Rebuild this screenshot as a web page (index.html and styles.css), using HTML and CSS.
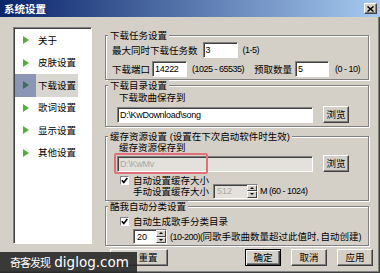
FILE: index.html
```html
<!DOCTYPE html>
<html lang="zh-CN">
<head>
  <meta charset="UTF-8" />
  <title>系统设置</title>
  <link rel="stylesheet" href="styles.css">
</head>
<body>
  <div class="window">
    <div class="title-bar">
      <span class="title">系统设置</span>
      <span class="close-btn">
        <svg width="7" height="6" viewBox="0 0 7 6"><path d="M0.5 0.5 L6.5 5.5 M6.5 0.5 L0.5 5.5" stroke="#000" stroke-width="1.5" /></svg>
      </span>
    </div>

    <div class="dialog">
      <ul class="side-list">
        <li><span class="ico"></span><span class="txt">关于</span></li>
        <li><span class="ico"></span><span class="txt">皮肤设置</span></li>
        <li class="selected"><span class="ico"></span><span class="txt">下载设置</span></li>
        <li><span class="ico"></span><span class="txt">歌词设置</span></li>
        <li><span class="ico"></span><span class="txt">显示设置</span></li>
        <li><span class="ico"></span><span class="txt">其他设置</span></li>
      </ul>

      <div class="main">
        <fieldset class="group g-task">
          <legend>下载任务设置</legend>
          <div class="row">
            <span>最大同时下载任务数</span>
            <input class="edit w35 ml5" type="text" value="3">
            <span class="en ml5">(1-5)</span>
          </div>
          <div class="row">
            <span>下载端口</span>
            <input class="edit w35 ml2" type="text" value="14222">
            <span class="en ml5">(1025 - 65535)</span>
            <span class="ml10">预取数量</span>
            <input class="edit w34 ml3" type="text" value="5">
            <span class="en ml6">(0 - 10)</span>
          </div>
        </fieldset>

        <fieldset class="group g-dir">
          <legend>下载目录设置</legend>
          <div class="row label-row"><span class="ml2">下载歌曲保存到</span></div>
          <div class="row path-row">
            <input class="edit path" type="text" value="D:\KwDownload\song">
            <button class="btn browse">浏览</button>
          </div>
        </fieldset>

        <fieldset class="group g-cache">
          <legend>缓存资源设置 (设置在下次启动软件时生效)</legend>
          <div class="row label-row"><span class="ml2">缓存资源保存到</span></div>
          <div class="row path-row">
            <span class="field">
              <input class="edit path disabled" type="text" value="D:\KwMv" disabled>
              <span class="mark"></span>
            </span>
            <button class="btn browse">浏览</button>
          </div>
          <div class="row check-row">
            <span class="check"><svg width="7" height="7" viewBox="0 0 7 7"><path d="M0.8 3.2 L2.8 5.4 L6.3 1" fill="none" stroke="#000" stroke-width="1.6" /></svg></span>
            <span class="ml4">自动设置缓存大小</span>
          </div>
          <div class="row spin-row">
            <span class="ml16">手动设置缓存大小</span>
            <span class="spin disabled w45 ml4">
              <input type="text" value="512" disabled>
              <span class="arrows"><i class="up"></i><i class="down"></i></span>
            </span>
            <span class="en ml2">M (60 - 1024)</span>
          </div>
        </fieldset>

        <fieldset class="group g-auto">
          <legend>酷我自动分类设置</legend>
          <div class="row check-row">
            <span class="check"><svg width="7" height="7" viewBox="0 0 7 7"><path d="M0.8 3.2 L2.8 5.4 L6.3 1" fill="none" stroke="#000" stroke-width="1.6" /></svg></span>
            <span class="ml4">自动生成歌手分类目录</span>
          </div>
          <div class="row spin-row">
            <span class="spin w34 ml16">
              <input type="text" value="20">
              <span class="arrows"><i class="up"></i><i class="down"></i></span>
            </span>
            <span class="ml3"><span class="en">(10-200)(</span>同歌手歌曲数量超过此值时<span class="en">, </span>自动创建<span class="en">)</span></span>
          </div>
        </fieldset>

        <div class="footer">
          <button class="btn reset">重置</button>
          <button class="btn default ok">确定</button>
          <button class="btn">取消</button>
          <button class="btn">应用</button>
        </div>
      </div>
    </div>

    <div class="watermark"><span class="wm-cn">奇客发现</span> diglog.com</div>
  </div>
</body>
</html>
```

FILE: styles.css
```css
html, body {
  margin: 0;
  width: 380px;
  height: 273px;
  overflow: hidden;
  font-family: "Liberation Sans", "Noto Sans CJK SC", sans-serif;
  font-size: 9.5px;
  color: #000;
  background: #d4d0c8;
}
.window {
  position: relative;
  height: 273px;
  box-shadow: inset -1px -1px 0 #404040, inset -2px -2px 0 #808080;
}

/* title bar */
.title-bar {
  height: 17px;
  display: flex;
  align-items: center;
  padding: 0 3px 0 4px;
  background: linear-gradient(to right, #0a246a, #a6caf0);
}
.title {
  color: #fff;
  font-weight: bold;
  font-size: 10.5px;
  line-height: 17px;
  font-family: "Noto Sans CJK SC", sans-serif;
}
.close-btn {
  margin-left: auto;
  width: 13px;
  height: 11px;
  box-sizing: border-box;
  background: #d4d0c8;
  border: 1px solid;
  border-color: #fff #404040 #404040 #fff;
  box-shadow: inset -1px -1px 0 #808080;
  display: flex;
  align-items: center;
  justify-content: center;
}
.close-btn svg { display: block; }

.dialog {
  display: flex;
  align-items: flex-start;
  padding-left: 13px;
}

/* left list */
.side-list {
  list-style: none;
  margin: 10px 0 0;
  padding: 1px;
  width: 79px;
  height: 217px;
  box-sizing: border-box;
  background: #fff;
  border: 1px solid;
  border-color: #808080 #fff #fff #808080;
  box-shadow: inset 1px 1px 0 #404040;
}
.side-list li {
  display: flex;
  height: 22.5px;
}
.side-list .ico {
  width: 21px;
  display: flex;
  align-items: center;
  justify-content: center;
}
.side-list .ico::before {
  content: "";
  border-left: 6px solid #52b03a;
  border-top: 4.5px solid transparent;
  border-bottom: 4.5px solid transparent;
}
.side-list .txt {
  display: flex;
  align-items: center;
  padding: 0 2px;
  line-height: 11px;
}
.side-list .selected .ico { background: #8b95b6; }
.side-list .selected .ico::before { border-left-color: #3f6e58; }
.side-list .selected .txt { background: #d8d6d1; }

/* right column */
.main {
  width: 264px;
  margin: 13px 0 0 13px;
}
.group {
  margin: 0;
  padding: 0;
  min-width: 0;
  border: 1px solid #808080;
  box-shadow: inset 1px 1px 0 #fff, 1px 1px 0 #fff;
}
.group legend {
  margin-left: 2px;
  padding: 0 2px;
  line-height: 11px;
  background: #d4d0c8;
}
.row {
  display: flex;
  align-items: center;
  line-height: 11px;
  white-space: nowrap;
}
.g-task { padding-bottom: 2px; }
.g-task .row { padding-left: 6px; height: 16px; margin-top: 3px; }
.g-task .row:first-of-type { margin-top: 1px; }

.g-dir .row, .g-cache .row, .g-auto .row { padding-left: 11px; }
.g-dir { padding-bottom: 3px; }
.g-dir .label-row { height: 11px; margin-top: 1px; }
.g-dir .path-row { height: 17px; margin-top: 3px; }

.g-cache { margin-top: 4px; padding-bottom: 4px; }
.g-cache .label-row { height: 11px; }
.g-cache .path-row { height: 17px; margin-top: 2px; }
.g-cache .check-row { height: 11px; margin-top: 3px; }
.g-cache .spin-row { height: 10px; }

.g-auto { padding-bottom: 1px; }
.g-auto .check-row { height: 11px; margin-top: 4px; }
.g-auto .spin-row { height: 15px; margin-top: 2px; }

.en {
  font-size: 9px;
  letter-spacing: -0.5px;
}
.ml2 { margin-left: 2px; }
.ml3 { margin-left: 3px; }
.ml4 { margin-left: 4px; }
.ml5 { margin-left: 5px; }
.ml6 { margin-left: 6px; }
.ml10 { margin-left: 10px; }
.ml16 { margin-left: 16px; }
.w34 { width: 34px; }
.w35 { width: 35px; }
.w45 { width: 45px; }

/* edit boxes */
.edit {
  box-sizing: border-box;
  height: 16px;
  margin-top: 0;
  margin-bottom: 0;
  padding: 0 2px;
  border: 1px solid;
  border-color: #808080 #fff #fff #808080;
  box-shadow: inset 1px 1px 0 #404040;
  background: #fff;
  font: 9px "Liberation Sans", sans-serif;
  letter-spacing: -0.3px;
  color: #000;
  outline: none;
}
.edit.path { width: 196px; }
.edit.disabled {
  background: #e4e1dc;
  color: #a8a8a8;
}
.field {
  position: relative;
  display: flex;
}
.mark {
  position: absolute;
  left: -3px;
  top: -3px;
  width: 94px;
  height: 21px;
  box-sizing: border-box;
  border: 2px solid #e2707a;
  border-radius: 2px;
}

/* buttons */
.btn {
  box-sizing: border-box;
  width: 36px;
  height: 17px;
  padding: 0;
  background: #d4d0c8;
  border: 1px solid;
  border-color: #fff #404040 #404040 #fff;
  box-shadow: inset -1px -1px 0 #808080;
  font: 9.5px "Noto Sans CJK SC", sans-serif;
  line-height: 15px;
  color: #000;
}
.btn.browse {
  width: 26px;
  margin-left: 10px;
}
.btn.default {
  border-color: #000;
  box-shadow: inset 1px 1px 0 #fff, inset -1px -1px 0 #404040, inset -2px -2px 0 #808080;
}

/* checkbox */
.check {
  width: 9px;
  height: 9px;
  margin-left: 3px;
  box-sizing: border-box;
  background: #fff;
  border: 1px solid;
  border-color: #808080 #fff #fff #808080;
  display: flex;
  align-items: center;
  justify-content: center;
}
.check svg { display: block; }

/* spin boxes */
.spin {
  display: flex;
  flex-shrink: 0;
  height: 15px;
  box-sizing: border-box;
  background: #fff;
  border: 1px solid;
  border-color: #808080 #fff #fff #808080;
  box-shadow: inset 1px 1px 0 #404040;
}
.spin input {
  flex: 1;
  width: 0;
  min-width: 0;
  margin: 0;
  padding: 0 0 0 3px;
  border: none;
  background: transparent;
  font: 9px "Liberation Sans", sans-serif;
  color: #000;
  outline: none;
}
.spin.disabled { background: #e4e1dc; }
.spin.disabled input { color: #a8a8a8; }
.arrows {
  width: 10px;
  display: flex;
  flex-direction: column;
}
.arrows i {
  flex: 1;
  box-sizing: border-box;
  background: #d4d0c8;
  border: 1px solid;
  border-color: #fff #404040 #404040 #fff;
  display: flex;
  align-items: center;
  justify-content: center;
}
.arrows .up::before {
  content: "";
  border-left: 2px solid transparent;
  border-right: 2px solid transparent;
  border-bottom: 2px solid #000;
}
.arrows .down::before {
  content: "";
  border-left: 2px solid transparent;
  border-right: 2px solid transparent;
  border-top: 2px solid #000;
}

/* bottom buttons */
.footer {
  display: flex;
  gap: 10px;
  margin: 3px -4px 0 0;
  padding-left: 5px;
}
.btn.reset {
  width: 58px;
  padding-left: 18px;
}
.btn.ok { margin-left: auto; }

.watermark {
  position: absolute;
  left: 0;
  bottom: 0;
  width: 137px;
  height: 21px;
  box-sizing: border-box;
  padding-left: 10px;
  background: rgba(40, 40, 40, 0.9);
  color: #fff;
  font: 13.5px "DejaVu Sans", sans-serif;
  line-height: 21px;
  white-space: nowrap;
}
.wm-cn {
  font-family: "Noto Sans CJK SC", sans-serif;
  font-size: 11px;
  letter-spacing: -1px;
}
```
